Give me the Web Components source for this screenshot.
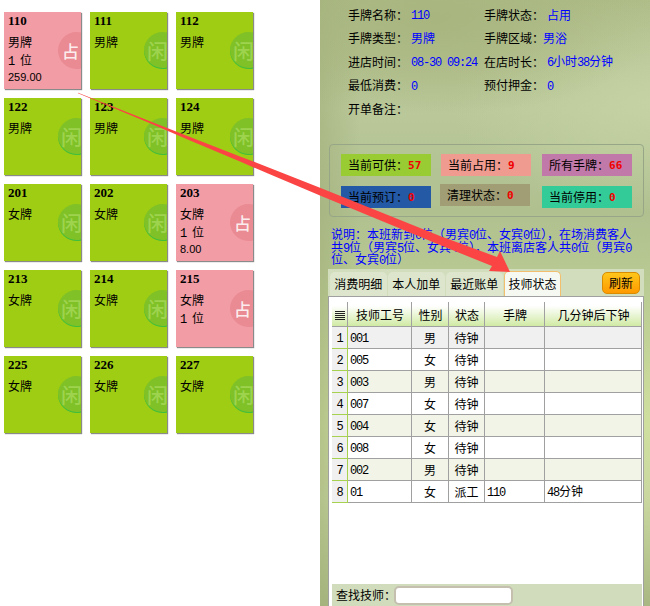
<!DOCTYPE html>
<html lang="zh">
<head>
<meta charset="utf-8">
<title>手牌</title>
<style>
  html, body { margin: 0; padding: 0; background: #fff; }
  body { font: 12px/14px "Noto Sans CJK SC", sans-serif; color: #000; }
</style>
</head>
<body>
<shift-page>
  <card-board slot="board">
    <hand-card no="110" type="男牌" busy seats="1 位" amount="259.00"></hand-card>
    <hand-card no="111" type="男牌"></hand-card>
    <hand-card no="112" type="男牌"></hand-card>
    <hand-card no="122" type="男牌"></hand-card>
    <hand-card no="123" type="男牌"></hand-card>
    <hand-card no="124" type="男牌"></hand-card>
    <hand-card no="201" type="女牌"></hand-card>
    <hand-card no="202" type="女牌"></hand-card>
    <hand-card no="203" type="女牌" busy seats="1 位" amount="8.00"></hand-card>
    <hand-card no="213" type="女牌"></hand-card>
    <hand-card no="214" type="女牌"></hand-card>
    <hand-card no="215" type="女牌" busy seats="1 位"></hand-card>
    <hand-card no="225" type="女牌"></hand-card>
    <hand-card no="226" type="女牌"></hand-card>
    <hand-card no="227" type="女牌"></hand-card>
  </card-board>
  <info-grid slot="panel">
    <info-field label="手牌名称&#xFF1A;" value="110"></info-field>
    <info-field label="手牌状态&#xFF1A;" value="占用"></info-field>
    <info-field label="手牌类型&#xFF1A;" value="男牌"></info-field>
    <info-field label="手牌区域&#xFF1A;" value="男浴" tight></info-field>
    <info-field label="进店时间&#xFF1A;" value="08-30 09:24"></info-field>
    <info-field label="在店时长&#xFF1A;" value="6小时38分钟"></info-field>
    <info-field label="最低消费&#xFF1A;" value="0"></info-field>
    <info-field label="预付押金&#xFF1A;" value="0"></info-field>
    <info-field label="开单备注&#xFF1A;" value=""></info-field>
  </info-grid>
  <stat-box slot="panel">
    <stat-chip label="当前可供&#xFF1A;" value="57" color="#99cc33"></stat-chip>
    <stat-chip label="当前占用&#xFF1A;" value="9" color="#ef9b90"></stat-chip>
    <stat-chip label="所有手牌&#xFF1A;" value="66" color="#c079a9"></stat-chip>
    <stat-chip label="当前预订&#xFF1A;" value="0" color="#2359a5"></stat-chip>
    <stat-chip label="清理状态&#xFF1A;" value="0" color="#a19d75" nudge></stat-chip>
    <stat-chip label="当前停用&#xFF1A;" value="0" color="#33cc99"></stat-chip>
  </stat-box>
  <note-text slot="panel" lines="说明&#xFF1A;本班新到0位&#xFF08;男宾0位、女宾0位&#xFF09;&#xFF0C;在场消费客人|共9位&#xFF08;男宾5位、女宾4位&#xFF09;&#xFF0C;本班离店客人共0位&#xFF08;男宾0|位、女宾0位&#xFF09;"></note-text>
  <tab-panel slot="panel">
    <tech-table></tech-table>
    <search-bar></search-bar>
  </tab-panel>
  <red-arrow slot="over"></red-arrow>
</shift-page>

<script>
// digits in the reference are 6px wide and 8px tall, narrower than the CJK font's own
const NUM_CSS = `.n { font-family: "Liberation Mono", monospace; font-size: 12px; letter-spacing: -1.2px; line-height: 1; }`;
function latin(text) {
  return text.replace(/[0-9][0-9.:\- ]*/g, (m) => `<span class="n">${m}</span>`);
}

class ShiftPage extends HTMLElement {
  constructor() {
    super();
    this.attachShadow({ mode: "open" });
  }
  connectedCallback() {
    this.shadowRoot.innerHTML = `
      <style>
        :host { display: flex; position: relative; width: 650px; height: 606px; overflow: hidden; }
        .left { width: 320px; flex: none; }
        .right {
          width: 330px; flex: none; display: flex; flex-direction: column;
          background:
            radial-gradient(ellipse 70% 16% at 35% 3%, #a8b57f 0%, rgba(168,181,127,0) 100%),
            radial-gradient(ellipse 60% 18% at 100% 17%, #c4d2a4 0%, rgba(196,210,164,0) 100%),
            linear-gradient(90deg, rgba(160,174,120,.55) 0%, rgba(160,174,120,0) 12%),
            linear-gradient(180deg, #aebc88 0%, #bac89a 18%, #b0c08f 35%, #bccd94 50%, #cfdf9e 70%, #cad8a0 82%, #a9b782 100%);
        }
      </style>
      <div class="left"><slot name="board"></slot></div>
      <div class="right"><slot name="panel"></slot></div>
      <slot name="over"></slot>`;
  }
}

class CardBoard extends HTMLElement {
  constructor() {
    super();
    this.attachShadow({ mode: "open" });
  }
  connectedCallback() {
    this.shadowRoot.innerHTML = `
      <style>
        :host {
          display: grid; grid-template-columns: repeat(3, 77px); grid-auto-rows: 77px;
          gap: 9px; padding: 12px 0 0 4px;
        }
      </style>
      <slot></slot>`;
  }
}

class HandCard extends HTMLElement {
  constructor() {
    super();
    this.attachShadow({ mode: "open" });
  }
  connectedCallback() {
    const busy = this.hasAttribute("busy");
    const seats = this.getAttribute("seats");
    const amount = this.getAttribute("amount");
    this.shadowRoot.innerHTML = `
      <style>
        ${NUM_CSS}
        :host { display: block; box-shadow: 1px 1px 1px #8a8a8a; }
        .card {
          position: relative; height: 77px; box-sizing: border-box; overflow: hidden;
          padding: 1px 0 0 4px; background: ${busy ? "#f29ca5" : "#9fcd14"};
          display: flex; flex-direction: column;
        }
        .no { font: bold 13px/15px "Liberation Serif", serif; height: 15px; margin-bottom: 5px; }
        .line { line-height: 18px; height: 18px; }
        .amount { font: 11px/17px "Liberation Sans", sans-serif; height: 17px; }
        .badge {
          position: absolute; left: 54px; top: 20px; width: 37px; height: 37px; border-radius: 50%;
          background: ${busy ? "#ea8a92" : "#7fc127"};
          box-shadow: ${busy ? "none" : "inset 0 -1px 0 #3fbf3c"};
        }
        .glyph {
          position: absolute; top: 8px; left: ${busy ? "4px" : "3px"}; width: ${busy ? "17px" : "20px"}; text-align: center;
          font-size: ${busy ? "17px" : "21px"}; line-height: 21px; font-weight: 500;
          color: ${busy ? "rgba(255,255,255,.85)" : "rgba(200,235,130,.45)"};
        }
      </style>
      <div class="card">
        <div class="no">${this.getAttribute("no")}</div>
        <div class="line">${this.getAttribute("type")}</div>
        ${seats ? `<div class="line">${latin(seats)}</div>` : ""}
        ${amount ? `<div class="amount">${amount}</div>` : ""}
        <div class="badge"><span class="glyph">${busy ? "占" : "闲"}</span></div>
      </div>`;
  }
}

class InfoGrid extends HTMLElement {
  constructor() {
    super();
    this.attachShadow({ mode: "open" });
  }
  connectedCallback() {
    this.shadowRoot.innerHTML = `
      <style>
        :host {
          display: grid; grid-template-columns: 136px 1fr; grid-auto-rows: 23.5px;
          padding: 3px 0 0 28px; height: 141px; box-sizing: border-box;
        }
      </style>
      <slot></slot>`;
  }
}

class InfoField extends HTMLElement {
  constructor() {
    super();
    this.attachShadow({ mode: "open" });
  }
  connectedCallback() {
    const w = this.hasAttribute("tight") ? 59 : 63;
    this.shadowRoot.innerHTML = `
      <style>
        ${NUM_CSS}
        :host { display: flex; align-items: center; white-space: nowrap; }
        .label { width: ${w}px; flex: none; }
        .value { color: #0000ff; }
      </style>
      <span class="label">${this.getAttribute("label")}</span>
      <span class="value">${latin(this.getAttribute("value"))}</span>`;
  }
}

class StatBox extends HTMLElement {
  constructor() {
    super();
    this.attachShadow({ mode: "open" });
  }
  connectedCallback() {
    this.shadowRoot.innerHTML = `
      <style>
        :host {
          display: grid; grid-template-columns: 100px 101px 90px; grid-auto-rows: 22px; row-gap: 10px;
          margin: 3px 6px 0 9px; padding: 9px 0 8px 11px;
          border: 1px solid #98a688; border-radius: 4px;
        }
      </style>
      <slot></slot>`;
  }
}

class StatChip extends HTMLElement {
  constructor() {
    super();
    this.attachShadow({ mode: "open" });
  }
  connectedCallback() {
    const nudge = this.hasAttribute("nudge") ? "margin: -2px 0 2px -1px;" : "";
    this.shadowRoot.innerHTML = `
      <style>
        :host {
          display: flex; align-items: center; width: 90px; height: 22px; padding-left: 7px; box-sizing: border-box;
          background: ${this.getAttribute("color")}; white-space: nowrap; ${nudge}
        }
        b { color: #f00000; font: bold 11px "DejaVu Sans Mono", monospace; }
      </style>
      <span>${this.getAttribute("label")}</span><b>${this.getAttribute("value")}</b>`;
  }
}

class NoteText extends HTMLElement {
  constructor() {
    super();
    this.attachShadow({ mode: "open" });
  }
  connectedCallback() {
    const lines = this.getAttribute("lines").split("|");
    this.shadowRoot.innerHTML = `
      <style>
        ${NUM_CSS}
        :host { display: block; margin: 11px 0 3.5px 11px; color: #0000ff; white-space: nowrap; }
        div { height: 12.5px; line-height: 12.5px; }
      </style>
      ${lines.map((l) => `<div>${latin(l)}</div>`).join("")}`;
  }
}

class TabPanel extends HTMLElement {
  constructor() {
    super();
    this.attachShadow({ mode: "open" });
  }
  connectedCallback() {
    const tabs = ["消费明细", "本人加单", "最近账单", "技师状态"];
    this.shadowRoot.innerHTML = `
      <style>
        :host {
          display: flex; flex-direction: column; flex: 1; min-height: 0;
          margin: 0 6px 0 8px; background: #d1ddbd;
        }
        .head { display: flex; align-items: flex-end; gap: 1.5px; height: 27px; padding-left: 2px; flex: none; }
        .tab {
          width: 56.5px; height: 24px; display: flex; align-items: center; justify-content: center;
          background: #dde6cd; border-radius: 5px 5px 0 0;
        }
        .tab.on {
          box-sizing: border-box; height: 25px; background: #f6f8f2;
          border: 1px solid #f2bf6e; border-bottom: 0; width: 57px;
        }
        .refresh {
          margin: 0 4px 2px auto; width: 38px; height: 22px; box-sizing: border-box;
          display: flex; align-items: center; justify-content: center;
          background: linear-gradient(#ffc61a, #ff9a00); border: 1px solid #d98c00; border-radius: 5px;
        }
        .body {
          flex: 1; min-height: 0; display: flex; flex-direction: column; box-sizing: border-box;
          border: 1px solid #a0a0a0; border-bottom: 0; background: #fff; padding: 0 1px 0 3px;
        }
      </style>
      <div class="head">
        ${tabs.map((t, i) => `<div class="tab${i === 3 ? " on" : ""}">${t}</div>`).join("")}
        <div class="refresh">刷新</div>
      </div>
      <div class="body"><slot></slot></div>`;
  }
}

class TechTable extends HTMLElement {
  constructor() {
    super();
    this.attachShadow({ mode: "open" });
  }
  connectedCallback() {
    const rows = [
      ["001", "男", "待钟", "", ""],
      ["005", "女", "待钟", "", ""],
      ["003", "男", "待钟", "", ""],
      ["007", "女", "待钟", "", ""],
      ["004", "女", "待钟", "", ""],
      ["008", "女", "待钟", "", ""],
      ["002", "男", "待钟", "", ""],
      ["01", "女", "派工", "110", "48分钟"],
    ];
    this.shadowRoot.innerHTML = `
      <style>
        ${NUM_CSS}
        :host { display: block; flex: 1; min-height: 0; }
        table { border-collapse: separate; border-spacing: 0; table-layout: fixed; width: 310px; }
        th, td { box-sizing: border-box; padding: 0; white-space: nowrap; overflow: hidden; }
        th {
          height: 30px; font-weight: 400; vertical-align: bottom; padding-bottom: 4px;
          border-bottom: 1px solid #a0a0a0;
          background:
            linear-gradient(#a0a0a0, #a0a0a0) right 5px / 1px 100% no-repeat,
            linear-gradient(#fff 0, #fff 30%, #d0eaa4 100%);
        }
        td {
          height: 22px; border-right: 1px solid #a0a0a0; border-bottom: 1px solid #a0a0a0;
          text-align: center;
        }
        td.seq { background: #f0f0f0; border-right-color: #a6d24f; border-bottom-color: #a6d24f; }
        td.txt { text-align: left; padding-left: 2px; }
        tr.alt td:not(.seq) { background: #f1f4e7; }
        tr.cur td { background: #f0f0f0; }
        svg { display: block; margin: 0 auto 1px; }
      </style>
      <table>
        <colgroup>
          <col style="width:16px"><col style="width:64px"><col style="width:37px">
          <col style="width:36px"><col style="width:60px"><col style="width:97px">
        </colgroup>
        <tr>
          <th><svg width="10" height="10" viewBox="0 0 10 10"><path d="M0 .5h10M0 2.5h10M0 4.5h10M0 6.5h10M0 8.5h10" stroke="#222" fill="none"/></svg></th>
          <th>技师工号</th><th>性别</th><th>状态</th><th>手牌</th><th>几分钟后下钟</th>
        </tr>
        ${rows.map((r, i) => `
        <tr class="${i === 0 ? "cur" : i % 2 === 0 ? "alt" : ""}">
          <td class="seq"><span class="n">${i + 1}</span></td>
          <td class="txt"><span class="n">${r[0]}</span></td>
          <td>${r[1]}</td>
          <td>${r[2]}</td>
          <td class="txt">${latin(r[3])}</td>
          <td class="txt">${latin(r[4])}</td>
        </tr>`).join("")}
      </table>`;
  }
}

class SearchBar extends HTMLElement {
  constructor() {
    super();
    this.attachShadow({ mode: "open" });
  }
  connectedCallback() {
    this.shadowRoot.innerHTML = `
      <style>
        :host {
          display: flex; align-items: center; flex: none; height: 22px;
          background: #d0dcbc; padding-left: 4px; white-space: nowrap;
        }
        span { width: 58px; flex: none; }
        input {
          width: 119px; height: 19px; box-sizing: border-box; margin: 1px 0 0; padding: 0;
          border: 2px solid #c4bfae; border-radius: 5px; background: #fff;
        }
      </style>
      <span>查找技师&#xFF1A;</span><input type="text">`;
  }
}

class RedArrow extends HTMLElement {
  constructor() {
    super();
    this.attachShadow({ mode: "open" });
  }
  connectedCallback() {
    // the shaft is not a straight taper: it thickens fast up to x=270, then slowly
    this.shadowRoot.innerHTML = `
      <style>
        :host { position: absolute; left: 0; top: 0; width: 650px; height: 606px; pointer-events: none; }
        svg { display: block; }
      </style>
      <svg width="650" height="606" viewBox="0 0 650 606">
        <polygon fill="#fb4444" points="78,92.8 150,121.3 190,136.9 240,156.4 268,167.2 320,187.8 440,235.9 497,257 500,251 510,272 489,271 492,266 440,245.1 320,195.4 268,173.6 240,161.6 190,140.5 150,123.3 78,93.2"/>
      </svg>`;
  }
}

customElements.define("shift-page", ShiftPage);
customElements.define("card-board", CardBoard);
customElements.define("hand-card", HandCard);
customElements.define("info-grid", InfoGrid);
customElements.define("info-field", InfoField);
customElements.define("stat-box", StatBox);
customElements.define("stat-chip", StatChip);
customElements.define("note-text", NoteText);
customElements.define("tab-panel", TabPanel);
customElements.define("tech-table", TechTable);
customElements.define("search-bar", SearchBar);
customElements.define("red-arrow", RedArrow);
</script>
</body>
</html>
